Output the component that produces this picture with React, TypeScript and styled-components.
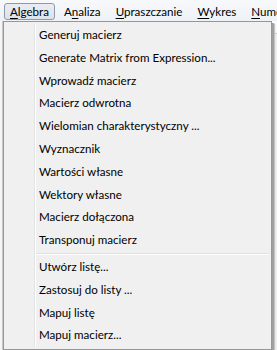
import styled, { createGlobalStyle } from 'styled-components';

const GlobalStyle = createGlobalStyle`
  html, body {
    margin: 0;
    padding: 0;
    background: #f0f0f0;
  }
  body {
    font-family: Lato, 'Open Sans', sans-serif;
    font-size: 11.6px;
    color: #000;
  }
`;

const topMenus = [
  { label: 'Algebra', key: 'A', active: true },
  { label: 'Analiza', key: 'n', active: false },
  { label: 'Upraszczanie', key: 'U', active: false },
  { label: 'Wykres', key: 'W', active: false },
  { label: 'Numeryczne', key: 'N', active: false },
];

const firstGroup = [
  'Generuj macierz',
  'Generate Matrix from Expression...',
  'Wprowadź macierz',
  'Macierz odwrotna',
  'Wielomian charakterystyczny ...',
  'Wyznacznik',
  'Wartości własne',
  'Wektory własne',
  'Macierz dołączona',
  'Transponuj macierz',
];

const secondGroup = ['Utwórz listę...', 'Zastosuj do listy ...', 'Mapuj listę', 'Mapuj macierz...'];

const Window = styled.div`
  position: relative;
  width: 277px;
  height: 350px;
  overflow: hidden;
  background: #f0f0f0;
`;

const MenuBar = styled.div`
  display: flex;
  align-items: center;
  height: 21px;
  padding-left: 4px;
  background: linear-gradient(#f7f9fc, #eef1f6);
  white-space: nowrap;
  overflow: hidden;
`;

const TopItem = styled.div<{ $active: boolean }>`
  height: 17px;
  line-height: 16px;
  margin-top: 2px;
  padding: 0 5px;
  box-sizing: border-box;
  border: 1px solid ${(p) => (p.$active ? '#8d9aad' : 'transparent')};
  border-radius: 3px;
  background: ${(p) => (p.$active ? 'linear-gradient(#e9edf3, #dde3eb)' : 'transparent')};
  margin-right: 3px;
  flex-shrink: 0;

  u {
    text-decoration: underline;
    text-underline-offset: 2px;
  }
`;

const Backdrop = styled.div`
  display: flex;
  height: 329px;
`;

const LeftStrip = styled.div`
  width: 3px;
  background: #f5f5f5;
  border-right: 1px solid #c8c8c8;
  box-sizing: border-box;
`;

const RightArea = styled.div`
  flex: 1;
  display: flex;
  flex-direction: column;
  align-items: flex-end;
`;

const RightBand = styled.div`
  width: 6px;
  height: 12px;
  background: #f9f9f9;
  border-bottom: 1px solid #c9c9c9;
`;

const Dropdown = styled.div`
  position: absolute;
  left: 3px;
  top: 21px;
  width: 269px;
  box-sizing: border-box;
  padding: 2px;
  background: #f0f0f0;
  border: 1px solid #979797;
  box-shadow: 2px 2px 0 #a0a0a0, 3px 3px 1px #c4c4c4;
`;

const MenuList = styled.div`
  display: flex;
  flex-direction: column;
  background: linear-gradient(to right, transparent 28px, #e2e3e3 28px, #e2e3e3 29px, #ffffff 29px, #ffffff 30px, transparent 30px);
`;

const Item = styled.div`
  height: 22.8px;
  line-height: 22.8px;
  padding-left: 33px;
  white-space: nowrap;
  color: #000;
`;

const Separator = styled.div`
  height: 4px;
  margin-left: 30px;
  display: flex;
  flex-direction: column;
  justify-content: center;

  &::before {
    content: '';
    height: 1px;
    background: #e0e0e0;
  }
  &::after {
    content: '';
    height: 1px;
    background: #ffffff;
  }
`;

function TopLabel({ label, k }: { label: string; k: string }) {
  const i = label.indexOf(k);
  return (
    <>
      {label.slice(0, i)}
      <u>{k}</u>
      {label.slice(i + 1)}
    </>
  );
}

export default function App() {
  return (
    <Window>
      <GlobalStyle />
      <MenuBar>
        {topMenus.map((m) => (
          <TopItem key={m.label} $active={m.active}>
            <TopLabel label={m.label} k={m.key} />
          </TopItem>
        ))}
      </MenuBar>
      <Backdrop>
        <LeftStrip />
        <RightArea>
          <RightBand />
        </RightArea>
      </Backdrop>
      <Dropdown>
        <MenuList>
          {firstGroup.map((t) => (
            <Item key={t}>{t}</Item>
          ))}
          <Separator />
          {secondGroup.map((t) => (
            <Item key={t}>{t}</Item>
          ))}
        </MenuList>
      </Dropdown>
    </Window>
  );
}
